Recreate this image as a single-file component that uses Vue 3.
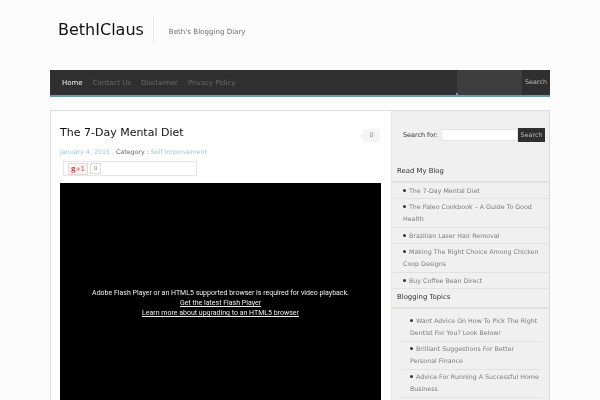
<script setup>
const nav = ['Contact Us', 'Disclaimer', 'Privacy Policy']
const blog = ['The 7-Day Mental Diet', 'The Paleo Cookbook – A Guide To Good Health', 'Brazilian Laser Hair Removal', 'Making The Right Choice Among Chicken Coop Designs', 'Buy Coffee Bean Direct']
const topics = ['Want Advice On How To Pick The Right Dentist For You? Look Below!', 'Brilliant Suggestions For Better Personal Finance', 'Advice For Running A Successful Home Business']
</script>

<template>
  <div class="page">
    <header class="head">
      <div class="logo">BethIClaus</div>
      <div class="tag">Beth's Blogging Diary</div>
    </header>
    <nav class="nav">
      <a class="item home">Home</a>
      <a v-for="n in nav" :key="n" class="item">{{ n }}</a>
      <div class="navsearch">
        <div class="navfield"></div>
        <div class="navbtn">Search</div>
      </div>
    </nav>
    <div class="wrap">
      <main class="main">
        <div class="titlerow">
          <h1>The 7-Day Mental Diet</h1>
          <div class="count">0</div>
        </div>
        <div class="meta"><span class="link">January 4, 2015</span><span class="cat">Category :</span><span class="link">Self Improvement</span></div>
        <div class="share">
          <span class="gplus"><b>g</b>+1</span><span class="gcount">0</span>
        </div>
        <div class="video">
          <p>Adobe Flash Player or an HTML5 supported browser is required for video playback.</p>
          <p><u>Get the latest Flash Player </u></p>
          <p><u>Learn more about upgrading to an HTML5 browser</u></p>
        </div>
      </main>
      <aside class="side">
        <div class="search">
          <label>Search for:</label>
          <div class="field"></div>
          <div class="btn">Search</div>
        </div>
        <h3 class="widget first">Read My Blog</h3>
        <ul class="list">
          <li v-for="b in blog" :key="b"><i></i>{{ b }}</li>
        </ul>
        <h3 class="widget">Blogging Topics</h3>
        <ul class="list inner">
          <li v-for="t in topics" :key="t"><i></i>{{ t }}</li>
        </ul>
      </aside>
    </div>
  </div>
</template>

<style>
html, body { margin: 0; background: #fcfcfc; overflow: hidden; }
</style>

<style scoped>
.page { width: 500px; height: 400px; margin-left: 50px; overflow: hidden; font-family: "DejaVu Sans", sans-serif; filter: blur(0.25px); }
.head { height: 70px; display: flex; align-items: flex-start; box-sizing: border-box; padding: 15px 0 0 8px; }
.logo { font-size: 16px; line-height: 30px; color: #111; padding-right: 9px; height: 29px; border-right: 1px solid #e6e6e6; }
.tag { font-size: 7.1px; color: #6f6f6f; padding: 11px 0 0 15px; line-height: 12px; }
.nav { height: 25px; background: #2f2f2f; border-bottom: 2px solid #6a9cb0; display: flex; align-items: center; padding-left: 12px; margin-bottom: 13px; position: relative; }
.nav::after { content: ""; position: absolute; left: 406px; bottom: 0; width: 2px; height: 2px; background: #6a9cb0; }
.item { font-size: 7px; color: #6a6a6a; margin-right: 10px; }
.home { color: #eee; }
.navsearch { margin-left: auto; display: flex; height: 100%; }
.navfield { width: 65px; background: #3d3d3d; }
.navbtn { width: 28px; background: #2f2f2f; color: #bbb; font-size: 6.4px; line-height: 25px; text-align: center; }
.wrap { display: flex; border: 1px solid #ddd; background: #fff; height: 300px; }
.main { width: 340px; box-sizing: border-box; padding: 0 10px 0 9px; flex: none; }
.titlerow { display: flex; justify-content: space-between; align-items: flex-start; padding-top: 14px; }
h1 { margin: 0; font-size: 11px; font-weight: 400; color: #111; line-height: 16px; }
.count { width: 17px; height: 13px; margin: 4px 1px 0 0; background: #f5f5f5; color: #888; font-size: 6.4px; line-height: 13px; text-align: center; position: relative; }
.count::before { content: ""; position: absolute; left: -4px; top: 3px; border: 4px solid transparent; border-left: 0; border-right-color: #f5f5f5; }
.meta { margin-top: 4px; font-size: 6.3px; line-height: 12px; color: #666; }
.link { color: #9cc7d6; }
.cat { margin: 0 2px 0 6px; }
.share { margin: 3px 0 7px 3px; width: 134px; height: 15px; box-sizing: border-box; border: 1px solid #e6e6e6; display: flex; align-items: center; padding-left: 4px; }
.gplus { color: #c9463a; font-size: 6.4px; background: #f8f4f4; border: 1px solid #e4d8d8; padding: 0 2px; line-height: 9px; }
.gplus b { font-family: "Liberation Serif", serif; font-size: 9px; }
.gcount { color: #777; font-size: 5.5px; border: 1px solid #ddd; padding: 0 3px; line-height: 9px; margin-left: 2px; }
.video { background: #000; height: 240px; color: #eee; font-family: Roboto, sans-serif; font-size: 7px; line-height: 10px; text-align: center; padding-top: 105px; box-sizing: border-box; }
.video p { margin: 0; }
.side { flex: 1; background: #f0f0f0; border-left: 1px solid #e6e6e6; min-width: 0; }
.search { display: flex; align-items: center; height: 14px; padding: 17px 0 0 11px; font-size: 6.4px; color: #333; white-space: nowrap; }
.search label { width: 35px; flex: none; }
.field { width: 77px; height: 12px; background: #fff; border: 1px solid #e4e4e4; margin-left: 3px; box-sizing: border-box; flex: none; }
.btn { width: 27px; height: 14px; background: #2f2f2f; color: #bbb; text-align: center; line-height: 14px; flex: none; }
.widget { margin: 0; font-size: 6.9px; font-weight: 400; color: #333; line-height: 12px; padding: 2px 0 3.5px 5px; border-bottom: 2px solid #e0e0da; }
.first { margin-top: 21px; }
.list { list-style: none; margin: 0; padding: 0; font-size: 6.3px; line-height: 12px; color: #7c7c7c; }
.list li { padding: 2px 6px 1.5px 11px; border-bottom: 1px solid #e2e2e2; }
.list li i { display: inline-block; width: 3px; height: 3px; background: #333; border-radius: 50%; margin: 0 3px 1px 0; vertical-align: middle; }
.inner { padding: 5px 7px 0 8px; }
.inner li { padding: 1.5px 0 1.5px 10px; }
</style>
